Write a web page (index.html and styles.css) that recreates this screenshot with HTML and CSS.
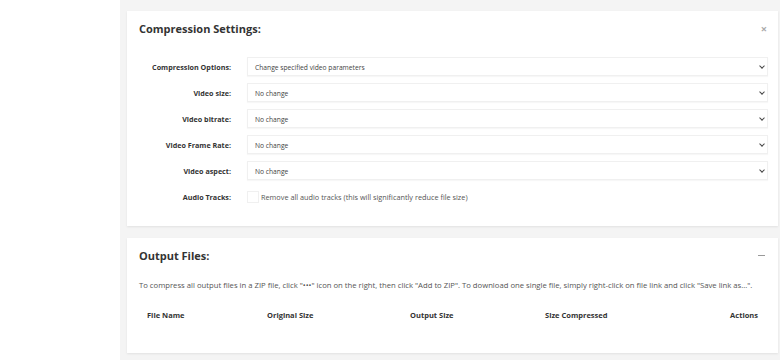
FILE: index.html
```html
<!DOCTYPE html>
<html lang="en">
<head>
    <meta charset="UTF-8">
    <meta name="viewport" content="width=device-width, initial-scale=1.0">
    <title>Video Compressor</title>
    <link rel="stylesheet" href="styles.css">
</head>
<body>
    <div class="sidebar"></div>

    <div class="main">
        <div class="card settings-card">
            <div class="card-header">
                <h2>Compression Settings:</h2>
                <span class="close-btn">&#215;</span>
            </div>

            <div class="settings-form">
                <label>Compression Options:</label>
                <div class="select-box">Change specified video parameters<span class="chevron"></span></div>

                <label>Video size:</label>
                <div class="select-box">No change<span class="chevron"></span></div>

                <label>Video bitrate:</label>
                <div class="select-box">No change<span class="chevron"></span></div>

                <label>Video Frame Rate:</label>
                <div class="select-box">No change<span class="chevron"></span></div>

                <label>Video aspect:</label>
                <div class="select-box">No change<span class="chevron"></span></div>

                <label>Audio Tracks:</label>
                <div class="check-row">
                    <span class="checkbox"></span>
                    <span>Remove all audio tracks (this will significantly reduce file size)</span>
                </div>
            </div>
        </div>

        <div class="card output-card">
            <div class="card-header">
                <h2>Output Files:</h2>
                <span class="minimize-btn"></span>
            </div>

            <p class="hint">To compress all output files in a ZIP file, click "&#8226;&#8226;&#8226;" icon on the right, then click "Add to ZIP". To download one single file, simply right-click on file link and click "Save link as...".</p>

            <div class="files-table">
                <div class="col-name">File Name</div>
                <div class="col-orig">Original Size</div>
                <div class="col-out">Output Size</div>
                <div class="col-comp">Size Compressed</div>
                <div class="col-actions">Actions</div>
            </div>
        </div>
    </div>
</body>
</html>
```

FILE: styles.css
```css
body {
    margin: 0;
    font-family: "Open Sans", Arial, sans-serif;
    color: #333;
    display: flex;
    height: 360px;
    overflow: hidden;
    background-color: white;
}

.sidebar {
    width: 120px;
    flex-shrink: 0;
    background-color: white;
}

.main {
    flex: 1;
    background-color: #f4f4f4;
    padding: 11px 2px 0 7px;
    display: flex;
    flex-direction: column;
    gap: 12px;
}

.card {
    background-color: white;
    box-shadow: 0 1px 2px rgba(0, 0, 0, 0.08);
    padding: 0 10px 0 12px;
}

.card-header {
    display: flex;
    justify-content: space-between;
    align-items: center;
    height: 34px;
}

.card-header h2 {
    margin: 0;
    font-size: 11px;
    font-weight: bold;
    color: #333;
}

.close-btn {
    color: #aaa;
    font-size: 11px;
    font-weight: bold;
    margin-right: 1px;
}

.minimize-btn {
    width: 7px;
    height: 1px;
    background-color: #999;
    margin-right: 3px;
}

.settings-card {
    padding-bottom: 20px;
}

.settings-form {
    display: grid;
    grid-template-columns: 92px 1fr;
    column-gap: 16px;
    row-gap: 7px;
    align-items: center;
    margin-top: 12px;
}

.settings-form label {
    text-align: right;
    font-size: 7.2px;
    font-weight: bold;
    color: #333;
}

.select-box {
    height: 19px;
    box-sizing: border-box;
    border: 1px solid #f0f0f0;
    box-shadow: 0 1px 1px rgba(0, 0, 0, 0.03);
    display: flex;
    align-items: center;
    justify-content: space-between;
    padding: 1px 3px 0 7px;
    font-size: 6.7px;
    color: #444;
}

.chevron {
    width: 3px;
    height: 3px;
    border-right: 1.3px solid #444;
    border-bottom: 1.3px solid #444;
    transform: rotate(45deg);
    margin-top: -2px;
}

.check-row {
    display: flex;
    align-items: center;
    gap: 2px;
    height: 19px;
    font-size: 7.3px;
    color: #555;
}

.checkbox {
    width: 10px;
    height: 10px;
    border: 1px solid #f0f0f0;
}

.output-card {
    height: 115px;
    box-sizing: border-box;
}

.hint {
    margin: 8px 0 0;
    font-size: 7.7px;
    color: #555;
}

.files-table {
    display: grid;
    grid-template-columns: 120px 143px 135px 1fr 80px;
    margin-top: 20px;
    font-size: 7.5px;
    font-weight: bold;
    color: #333;
    padding: 0 10px 0 8px;
}

.col-actions {
    text-align: right;
}
```
